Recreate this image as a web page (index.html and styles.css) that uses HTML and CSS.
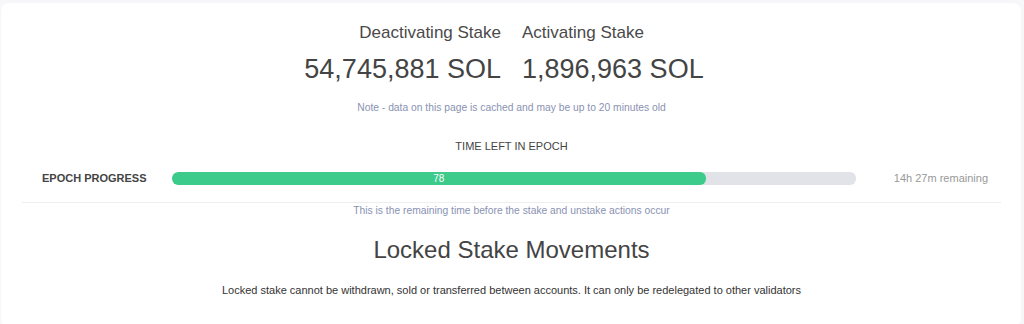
FILE: index.html
```html
<!DOCTYPE html>
<html lang="en">
  <head>
    <meta charset="UTF-8" />
    <meta name="viewport" content="width=device-width, initial-scale=1.0" />
    <title>Stake Overview</title>
    <link rel="stylesheet" href="styles.css">
  </head>
  <body>
    <div class="card">
      <div class="stake-stats">
        <div class="stat stat-left">
          <div class="stat-title">Deactivating Stake</div>
          <div class="stat-value">54,745,881 SOL</div>
        </div>
        <div class="stat stat-right">
          <div class="stat-title">Activating Stake</div>
          <div class="stat-value">1,896,963 SOL</div>
        </div>
      </div>

      <p class="note">Note - data on this page is cached and may be up to 20 minutes old</p>

      <div class="epoch-title">TIME LEFT IN EPOCH</div>

      <div class="epoch-row">
        <div class="epoch-label">EPOCH PROGRESS</div>
        <div class="progress">
          <div class="progress-fill" style="width: 78%">78</div>
        </div>
        <div class="epoch-remaining">14h 27m remaining</div>
      </div>

      <hr class="divider" />
      <p class="note sub-note">This is the remaining time before the stake and unstake actions occur</p>

      <h2 class="section-title">Locked Stake Movements</h2>
      <p class="section-text">
        Locked stake cannot be withdrawn, sold or transferred between accounts. It can only be redelegated to other validators
      </p>
    </div>
  </body>
</html>
```

FILE: styles.css
```css
body {
  font-family: "Liberation Sans", Arial, sans-serif;
  background-color: #f7f7fa;
  margin: 0;
  padding: 0;
  color: #444;
}

.card {
  background-color: #fff;
  margin: 3px 3px 0 1px;
  padding: 20px 20px 30px 21px;
  border-radius: 8px;
}

.stake-stats {
  display: grid;
  grid-template-columns: 1fr 1fr;
  column-gap: 21px;
}

.stat-left {
  text-align: right;
}

.stat-right {
  text-align: left;
}

.stat-title {
  font-size: 17px;
  line-height: 20px;
  color: #4a4a4a;
}

.stat-value {
  margin-top: 10px;
  font-size: 27px;
  line-height: 32px;
  color: #444;
}

.note {
  margin: 16px 0 0;
  font-size: 10.3px;
  line-height: 14px;
  color: #8a92b2;
  text-align: center;
}

.epoch-title {
  margin-top: 24px;
  font-size: 11px;
  line-height: 14px;
  text-align: center;
  color: #444;
}

.epoch-row {
  display: grid;
  grid-template-columns: 130px 1fr 145px;
  align-items: center;
  margin-top: 17px;
  padding-left: 20px;
  height: 16px;
}

.epoch-label {
  font-size: 11px;
  font-weight: bold;
  color: #444;
}

.progress {
  height: 13px;
  background-color: #e2e3e8;
  border-radius: 6px;
  overflow: hidden;
}

.progress-fill {
  height: 100%;
  background-color: #3ccb8a;
  border-radius: 6px;
  color: #fff;
  font-size: 10px;
  line-height: 13px;
  text-align: center;
}

.epoch-remaining {
  font-size: 11px;
  color: #999;
  text-align: right;
  padding-right: 13px;
}

.divider {
  border: none;
  border-top: 1px solid #eee;
  margin: 16px 0 0;
}

.sub-note {
  margin-top: 1px;
}

.section-title {
  margin: 18px 0 0;
  font-size: 24px;
  line-height: 28px;
  font-weight: normal;
  text-align: center;
  color: #444;
}

.section-text {
  margin: 19px 0 0;
  font-size: 11px;
  line-height: 14px;
  text-align: center;
  color: #333;
}
```
